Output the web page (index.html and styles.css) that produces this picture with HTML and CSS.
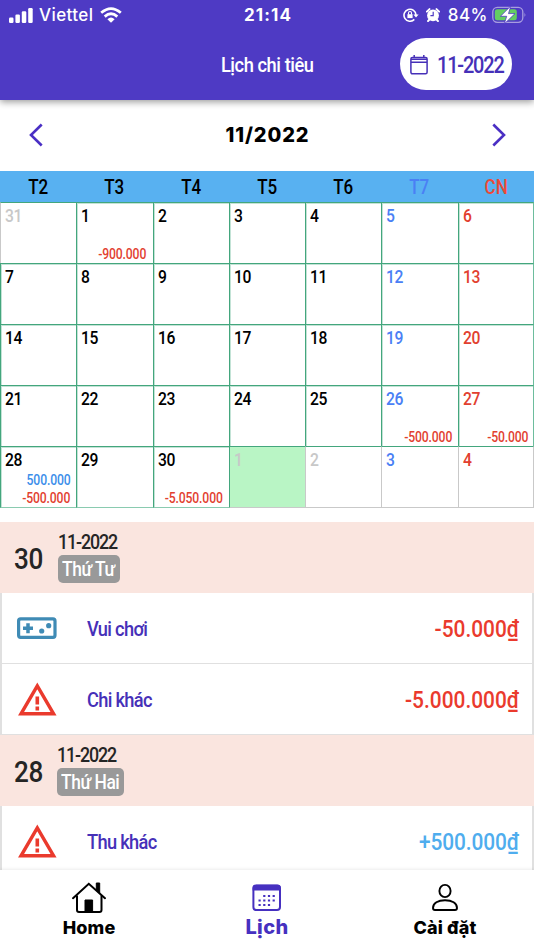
FILE: index.html
```
<!DOCTYPE html>
<html lang="vi">
<head>
    <meta charset="UTF-8">
    <meta name="viewport" content="width=device-width, initial-scale=1.0">
    <title>Lịch chi tiêu</title>
    <link rel="stylesheet" href="styles.css">
</head>
<body>
    <!-- Header Section -->
    <header>
        <div class="status-bar">
            <div class="status-left">
                <svg width="24" height="15" viewBox="0 0 24 15" fill="#fff"><rect x="0" y="9.5" width="4.5" height="5.5" rx="1.2"/><rect x="6.4" y="6.5" width="4.5" height="8.5" rx="1.2"/><rect x="12.8" y="3.3" width="4.5" height="11.7" rx="1.2"/><rect x="19.2" y="0" width="4.5" height="15" rx="1.2"/></svg>
                <span class="carrier">Viettel</span>
                <svg width="22" height="16" viewBox="0 0 22 16" fill="none" stroke="#fff" stroke-width="2.8"><path d="M1.2 5.8Q11-2.6 20.8 5.8"/><path d="M4.7 9.6Q11 4 17.3 9.6"/><path d="M7.4 12.2Q11 8.8 14.6 12.2L11 15.8Z" fill="#fff" stroke="none"/></svg>
            </div>
            <span class="time">21:14</span>
            <div class="status-right">
                <svg width="16" height="14" viewBox="0 0 16 14" fill="none" stroke="#fff" stroke-width="1.6"><path d="M11.3 11.4A6 6 0 1 1 13 7"/><path d="M10.4 6.4h5.2L13 9.6z" fill="#fff" stroke="none"/><rect x="4.4" y="6.2" width="5.2" height="3.9" fill="#fff" stroke="none"/><path d="M5.5 6.5V5a1.5 1.5 0 0 1 3 0v1.5" stroke-width="1.1"/></svg>
                <svg class="alarm" width="14" height="14" viewBox="0 0 14 14"><circle cx="7" cy="7.4" r="5.9" fill="#fff"/><path d="M.9 3.6L3.5 1.1M13.1 3.6L10.5 1.1M3.2 11.8L2 13.1M10.8 11.8L12 13.1" stroke="#fff" stroke-width="2" stroke-linecap="round"/><path d="M7.2 3.8v3.8H4.4" fill="none" stroke="#4e3ac4" stroke-width="1.2"/></svg>
                <span class="percent">84%</span>
                <svg width="35" height="18" viewBox="0 0 35 18"><rect x=".8" y="1.3" width="30" height="15" rx="4.5" fill="none" stroke="#a79ddf" stroke-width="1.3"/><path d="M32.5 6.5q1.8 2.3 0 4.6z" fill="#a79ddf"/><rect x="2.8" y="3.3" width="22" height="11" rx="2.5" fill="#63ce62"/><path d="M18.8 0L8.4 10.3h6.3L12.2 18 23 7.6h-6.5z" fill="#fff" stroke="#4e3ac4" stroke-width=".8"/></svg>
            </div>
        </div>
        <div class="title-bar">
            <h1><span class="narrow">Lịch chi tiêu</span></h1>
            <button class="month-button">
                <svg width="18" height="20" viewBox="0 0 18 20" fill="none" stroke="#4630b8" stroke-width="1.5"><rect x=".9" y="2.6" width="16.2" height="16.2" rx="1.5"/><path d="M1 4.3h16M1 7.2h16M4.2 0v3M13.8 0v3"/></svg>
                <span class="narrow">11-2022</span>
            </button>
        </div>
    </header>

    <!-- Month Navigation -->
    <div class="month-nav">
        <svg width="14" height="24" viewBox="0 0 14 24"><path d="M12.7 1.5L2 12l10.7 10.5"/></svg>
        <span>11/2022</span>
        <svg width="14" height="24" viewBox="0 0 14 24"><path d="M1.3 1.5L12 12 1.3 22.5"/></svg>
    </div>

    <!-- Calendar -->
    <div class="week-days">
        <span>T2</span><span>T3</span><span>T4</span><span>T5</span><span>T6</span><span class="sat">T7</span><span class="sun">CN</span>
    </div>
    <div class="calendar">
        <div class="day other"><b>31</b></div>
        <div class="day"><b>1</b><i class="out">-900.000</i></div>
        <div class="day"><b>2</b></div>
        <div class="day"><b>3</b></div>
        <div class="day"><b>4</b></div>
        <div class="day sat"><b>5</b></div>
        <div class="day sun"><b>6</b></div>

        <div class="day"><b>7</b></div>
        <div class="day"><b>8</b></div>
        <div class="day"><b>9</b></div>
        <div class="day"><b>10</b></div>
        <div class="day"><b>11</b></div>
        <div class="day sat"><b>12</b></div>
        <div class="day sun"><b>13</b></div>

        <div class="day"><b>14</b></div>
        <div class="day"><b>15</b></div>
        <div class="day"><b>16</b></div>
        <div class="day"><b>17</b></div>
        <div class="day"><b>18</b></div>
        <div class="day sat"><b>19</b></div>
        <div class="day sun"><b>20</b></div>

        <div class="day"><b>21</b></div>
        <div class="day"><b>22</b></div>
        <div class="day"><b>23</b></div>
        <div class="day"><b>24</b></div>
        <div class="day"><b>25</b></div>
        <div class="day sat"><b>26</b><i class="out">-500.000</i></div>
        <div class="day sun"><b>27</b><i class="out">-50.000</i></div>

        <div class="day last"><b>28</b><i class="in">500.000</i><i class="out">-500.000</i></div>
        <div class="day last"><b>29</b></div>
        <div class="day last"><b>30</b><i class="out">-5.050.000</i></div>
        <div class="day last other today"><b>1</b></div>
        <div class="day last other"><b>2</b></div>
        <div class="day last other sat"><b>3</b></div>
        <div class="day last other sun"><b>4</b></div>
    </div>

    <!-- Transactions -->
    <main class="transactions">
        <div class="group-header">
            <span class="group-day narrow">30</span>
            <div class="group-info">
                <span class="group-month narrow">11-2022</span>
                <span class="badge wed"><span class="narrow">Thứ Tư</span></span>
            </div>
        </div>
        <div class="row">
            <svg width="42" height="40" viewBox="0 0 42 40"><rect x="3.6" y="10.9" width="36.4" height="18.4" rx="2" fill="none" stroke="#3f8bb5" stroke-width="3.2"/><path d="M8 20.2h10M13 15.2v10" stroke="#3f8bb5" stroke-width="3.5"/><circle cx="26.7" cy="23" r="2.6" fill="#3f8bb5"/><circle cx="33.7" cy="17.7" r="2.6" fill="#3f8bb5"/></svg>
            <span class="name narrow">Vui chơi</span>
            <span class="amount out narrow">-50.000₫</span>
        </div>
        <div class="row">
            <svg width="42" height="40" viewBox="0 0 42 40"><path d="M22.3 6.8L6 34.8h32.6z" fill="none" stroke="#ea3a2d" stroke-width="3.4"/><path d="M22.3 17.5v8M22.3 27.5v4" stroke="#ea3a2d" stroke-width="3.6"/></svg>
            <span class="name narrow">Chi khác</span>
            <span class="amount out narrow">-5.000.000₫</span>
        </div>
        <div class="group-header">
            <span class="group-day narrow">28</span>
            <div class="group-info mon">
                <span class="group-month narrow">11-2022</span>
                <span class="badge"><span class="narrow">Thứ Hai</span></span>
            </div>
        </div>
        <div class="row">
            <svg width="42" height="40" viewBox="0 0 42 40"><path d="M22.3 6.8L6 34.8h32.6z" fill="none" stroke="#ea3a2d" stroke-width="3.4"/><path d="M22.3 17.5v8M22.3 27.5v4" stroke="#ea3a2d" stroke-width="3.6"/></svg>
            <span class="name narrow">Thu khác</span>
            <span class="amount in narrow">+500.000₫</span>
        </div>
    </main>

    <!-- Bottom Tabs -->
    <nav>
        <div class="tab">
            <svg width="34" height="32" viewBox="0 0 34 32" fill="none" stroke="#000" stroke-width="2"><path d="M1 17.2L16.8 2.8 33 17.2" stroke-linecap="round"/><path d="M5 14.5V29q0 2 2 2h20.5q2 0 2-2V14.5"/><path d="M24.3 2h3.4v10l-3.4-3z" fill="#000" stroke-width="1"/><path d="M13 31V19h7.6v12z" fill="#000" stroke-width="1"/></svg>
            <span>Home</span>
        </div>
        <div class="tab active">
            <svg width="30" height="32" viewBox="0 0 30 32"><rect x="1.4" y="4.5" width="26.6" height="24.5" rx="3" fill="#fff" stroke="#4630c0" stroke-width="2"/><path d="M.6 9.5V7q0-3.2 3.2-3.2h21.8q3.2 0 3.2 3.2v2.5z" fill="#4630c0"/><path d="M11.2 15h12M6.5 19.5h16.5M6.5 24h12" stroke="#4630c0" stroke-width="2.2" stroke-dasharray="2.2 2.5"/></svg>
            <span>Lịch</span>
        </div>
        <div class="tab">
            <svg width="28" height="32" viewBox="0 0 28 32" fill="none" stroke="#000" stroke-width="1.9"><ellipse cx="14" cy="10" rx="5.6" ry="6.1"/><path d="M2 27C2 22.1 7 19.2 14 19.2s12 2.9 12 7.8q0 2-2 2H4q-2 0-2-2z"/></svg>
            <span>Cài đặt</span>
        </div>
    </nav>
</body>
</html>
```

FILE: styles.css
```
* {
    box-sizing: border-box;
}

body {
    margin: 0;
    height: 950px;
    overflow: hidden;
    display: flex;
    flex-direction: column;
    font-family: Roboto, sans-serif;
    background-color: #fff;
    color: #000;
}

svg {
    display: block;
    flex-shrink: 0;
}

/* condensed look for the labels and numbers */
.narrow {
    display: inline-block;
    white-space: nowrap;
    transform: scaleX(0.87);
    transform-origin: left center;
}

/* Header Section */
header {
    flex-shrink: 0;
    height: 100px;
    background-color: #4e3ac4;
    color: #fff;
    box-shadow: 0 2px 7px rgba(0, 0, 0, 0.4);
}

.status-bar {
    display: grid;
    grid-template-columns: 1fr auto 1fr;
    align-items: center;
    height: 30px;
    padding: 0 7px 0 9px;
    font-family: Inter, sans-serif;
}

.status-left,
.status-right {
    display: flex;
    align-items: center;
}

.status-right {
    justify-content: flex-end;
}

.carrier {
    margin: 0 7px 0 6px;
    font-size: 17px;
    font-weight: 500;
    letter-spacing: 0.4px;
}

.time {
    font-size: 17px;
    font-weight: 700;
    letter-spacing: 1.1px;
}

.alarm {
    margin-left: 7px;
}

.percent {
    margin: 0 4px 0 8px;
    font-size: 17px;
    font-weight: 500;
    letter-spacing: 0.5px;
}

.title-bar {
    display: grid;
    grid-template-columns: 1fr auto 1fr;
    align-items: center;
    height: 52px;
    margin-top: 8px;
    padding-right: 22px;
}

h1 {
    grid-column: 2;
    margin: 2px 0 0 22px;
    font-size: 21px;
    font-weight: 500;
}

h1 .narrow {
    transform-origin: center;
    letter-spacing: -0.5px;
}

.month-button {
    justify-self: end;
    display: flex;
    align-items: center;
    gap: 9px;
    width: 112px;
    height: 52px;
    padding: 1px 0 0 10px;
    border: none;
    border-radius: 26px;
    background-color: #fff;
    color: #4630b8;
    font-family: Roboto, sans-serif;
    font-size: 24px;
    font-weight: 500;
    letter-spacing: -1.4px;
}

.month-button .narrow {
    transform: scaleX(0.83);
}

/* Month Navigation */
.month-nav {
    flex-shrink: 0;
    display: flex;
    justify-content: space-between;
    align-items: center;
    height: 71px;
    padding: 0 28px 1px 29px;
    font-family: Inter, sans-serif;
    font-size: 20px;
    font-weight: 800;
    letter-spacing: 0.9px;
}

.month-nav path {
    fill: none;
    stroke: #4a2fc4;
    stroke-width: 2.6;
}

/* Calendar */
.week-days {
    flex-shrink: 0;
    display: grid;
    grid-template-columns: repeat(7, 1fr);
    height: 31px;
    background-color: #58b1f1;
    font-size: 20px;
    font-weight: 500;
    line-height: 32px;
    text-align: center;
}

.week-days span {
    transform: scaleX(0.85);
}

.calendar {
    flex-shrink: 0;
    display: grid;
    grid-template-columns: repeat(7, minmax(0, 1fr));
    grid-template-rows: repeat(4, 61px) 62px;
    height: 306px;
}

.day {
    display: flex;
    flex-direction: column;
    padding: 2px 6px 0 4px;
    border-top: 1px solid #43a67d;
    border-left: 1px solid #43a67d;
    box-shadow: inset 1px 1px 0 #c3e3d6;
}

.day:nth-child(7n) {
    padding-right: 5px;
    border-right: 1px solid #6dbd9d;
}

.day.last {
    padding-bottom: 0;
    border-bottom: 1px solid #8acbb0;
}

.day b {
    align-self: flex-start;
    font-size: 18px;
    font-weight: 500;
    line-height: 21px;
    letter-spacing: -0.6px;
    transform: scaleX(0.87);
    transform-origin: left;
}

.day i {
    align-self: flex-end;
    font-size: 14px;
    font-style: normal;
    font-weight: 500;
    line-height: 18px;
    letter-spacing: -0.15px;
    transform: scaleX(0.87);
    transform-origin: right;
}

.day .out {
    margin-top: auto;
    color: #e2402f;
}

.day .in {
    margin-top: 1px;
    color: #3b8eea;
}

.day.other {
    border-left-color: #c9c9c9;
    color: #c8c8c8;
    box-shadow: none;
}

.day.other.last {
    border-right-color: #c9c9c9;
    border-bottom-color: #c9c9c9;
}

.day.today {
    border-left-color: #43a67d;
    background-color: #b9f5c5;
}

.week-days .sat,
.day.sat {
    color: #4a80f5;
}

.day.sun {
    color: #e2402f;
}

.week-days .sun {
    color: #ec4a38;
}

/* Transactions */
.transactions {
    flex: 1;
    min-height: 0;
    overflow: hidden;
    padding-top: 14px;
}

.group-header {
    display: flex;
    align-items: center;
    height: 71px;
    padding-left: 14px;
    background-color: #fae5df;
    color: #252525;
}

.group-day {
    width: 44px;
    padding-top: 2px;
    font-size: 30px;
    font-weight: 500;
    letter-spacing: -0.3px;
}

.group-info {
    display: flex;
    flex-direction: column;
    align-items: flex-start;
    height: 63px;
    padding-top: 1px;
}

.group-info.mon {
    margin-left: -1px;
}

.group-month {
    height: 28px;
    font-size: 20.5px;
    font-weight: 500;
    line-height: 30px;
    letter-spacing: -1.3px;
}

.badge {
    width: 67px;
    height: 28px;
    padding-left: 4px;
    border-radius: 5px;
    background-color: #999;
    color: #fff;
    font-size: 20px;
    font-weight: 500;
    line-height: 29px;
    letter-spacing: -0.5px;
}

.badge.wed {
    width: 62px;
}

.row {
    display: flex;
    align-items: center;
    height: 71px;
    padding: 0 13px;
    border: solid #e0e0e0;
    border-width: 0 2px 1px;
}

.name {
    margin: 2px 0 0 30px;
    color: #4630b8;
    font-size: 21px;
    font-weight: 500;
    letter-spacing: -0.8px;
}

.amount {
    margin: 2px 0 0 auto;
    font-size: 24px;
    font-weight: 500;
    transform-origin: right;
}

.amount.out {
    color: #ea3a2d;
}

.amount.in {
    color: #4fadee;
    letter-spacing: -0.1px;
}

/* Bottom Tabs */
nav {
    flex-shrink: 0;
    display: grid;
    grid-template-columns: repeat(3, 1fr);
    height: 80px;
    padding-top: 11px;
    background-color: #fff;
    box-shadow: 0 -1px 3px rgba(0, 0, 0, 0.08);
    z-index: 1;
}

.tab {
    display: flex;
    flex-direction: column;
    align-items: center;
    font-family: Inter, sans-serif;
    font-size: 18px;
    font-weight: 800;
    line-height: 30px;
    letter-spacing: 0.15px;
}

.tab.active {
    color: #4630c0;
    font-size: 20px;
    line-height: 28px;
    letter-spacing: 0.4px;
}
```
